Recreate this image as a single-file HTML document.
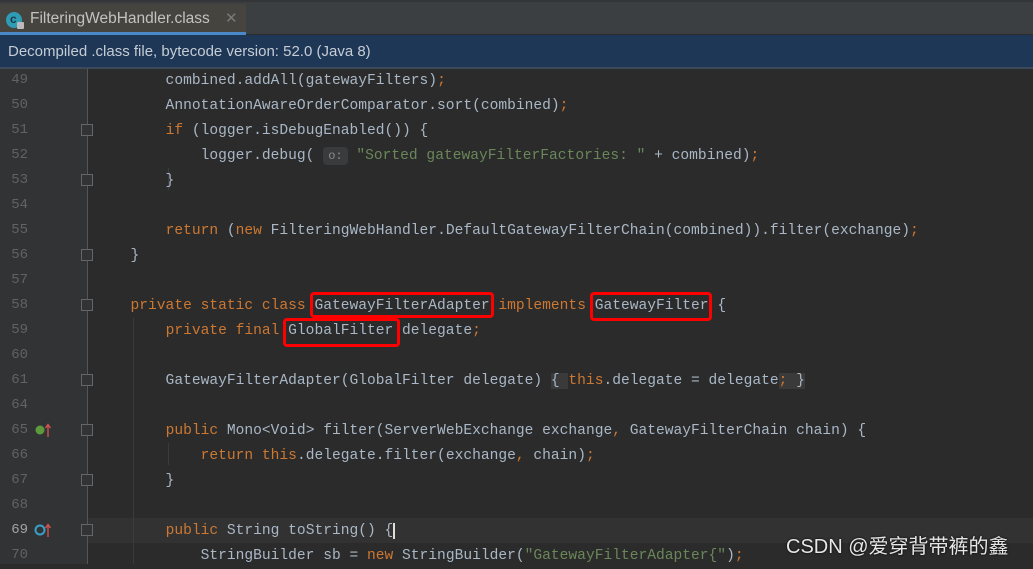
<!DOCTYPE html>
<html><head><meta charset="utf-8"><style>
*{margin:0;padding:0;box-sizing:border-box}
body{width:1033px;height:564px;overflow:hidden;background:#2b2b2b;position:relative;font-family:"Liberation Mono",monospace}
.tabbar{position:absolute;left:0;top:0;width:1033px;height:34px;background:#3c3f41;border-top:2px solid #333537}
.tab{position:absolute;left:0;top:2px;width:246px;height:30px;background:#45443f;font-family:"Liberation Sans",sans-serif;font-size:15.5px;color:#c2c2c2;line-height:30px;padding-left:30px}
.tab .x{position:absolute;left:225px;top:0;color:#7a7a7a;font-size:15px}
.tabline{position:absolute;left:0;top:30px;width:246px;height:4px;background:#4a88c7}
.icon{position:absolute;left:6px;top:8px;width:16px;height:16px;border-radius:50%;background:#2f9cb5}
.icon:after{content:"c";position:absolute;left:4px;top:-8px;color:#1c3a44;font-size:12px;font-weight:bold}
.lock{position:absolute;left:17px;top:18px;width:7px;height:7px;background:#bbb;border-radius:1px}
.notice{position:absolute;left:0;top:35px;width:1033px;height:34px;background:#1f3756;border-bottom:2px solid #3b4b5c;font-family:"Liberation Sans",sans-serif;font-size:15px;color:#c5ccd4;line-height:34px;padding-left:8px}
.gutter{position:absolute;left:0;top:69px;width:88px;height:495px;background:#313335}
.gline{position:absolute;left:87px;top:69px;width:1px;height:495px;background:#555}
.guide{position:absolute;width:1px;background:#3b3b3b}
.cur{position:absolute;left:88px;top:518px;width:945px;height:25px;background:#323232}
.ln{position:absolute;left:0;width:28px;text-align:right;font-size:14px;color:#606366;line-height:25px}
.c{position:absolute;left:95.5px;font-size:14.6px;line-height:25px;color:#a9b7c6;white-space:pre;top:0}
.k{color:#cc7832}.s{color:#6a8759}
.box{position:absolute;border:3px solid #f00;border-radius:4px}
.fold{position:absolute;left:81px;width:12px;height:12px;border:1px solid #666;background:#313335}
.hint{background:#3a3b3c;color:#8c8c8c;border-radius:4px;font-size:12px;padding:2px 5px}
.fb{background:#3a3a3a}
.wm{position:absolute;left:786px;top:530px;font-family:"Liberation Sans","Noto Sans CJK SC",sans-serif;font-size:20px;color:#e6e6e6;text-shadow:0 0 2px #000}
</style></head><body>
<div class="tabbar"><div class="tab"><div class="icon"></div><div class="lock"></div>FilteringWebHandler.class<span class="x">✕</span></div><div class="tabline"></div></div>
<div class="notice">Decompiled .class file, bytecode version: 52.0 (Java 8)</div>
<div class="gutter"></div>
<div class="cur"></div>
<div class="gline"></div>
<div class="guide" style="left:133px;top:318px;height:246px"></div>
<div class="guide" style="left:168px;top:168px;height:22px"></div>
<div class="guide" style="left:168px;top:443px;height:22px"></div>

<div class="ln" style="top:68px">49</div><div class="c" style="top:69px">        combined.addAll(gatewayFilters)<span class="k">;</span></div>
<div class="ln" style="top:93px">50</div><div class="c" style="top:94px">        AnnotationAwareOrderComparator.sort(combined)<span class="k">;</span></div>
<div class="ln" style="top:118px">51</div><div class="c" style="top:119px">        <span class="k">if </span>(logger.isDebugEnabled()) {</div>
<div class="ln" style="top:143px">52</div><div class="c" style="top:144px">            logger.debug( <span class="hint">o:</span> <span class="s">"Sorted gatewayFilterFactories: "</span> + combined)<span class="k">;</span></div>
<div class="ln" style="top:168px">53</div><div class="c" style="top:169px">        }</div>
<div class="ln" style="top:193px">54</div>
<div class="ln" style="top:218px">55</div><div class="c" style="top:219px">        <span class="k">return </span>(<span class="k">new </span>FilteringWebHandler.DefaultGatewayFilterChain(combined)).filter(exchange)<span class="k">;</span></div>
<div class="ln" style="top:243px">56</div><div class="c" style="top:244px">    }</div>
<div class="ln" style="top:268px">57</div>
<div class="ln" style="top:293px">58</div><div class="c" style="top:294px">    <span class="k">private static class </span>GatewayFilterAdapter <span class="k">implements </span>GatewayFilter {</div>
<div class="ln" style="top:318px">59</div><div class="c" style="top:319px">        <span class="k">private final </span>GlobalFilter delegate<span class="k">;</span></div>
<div class="ln" style="top:343px">60</div>
<div class="ln" style="top:368px">61</div><div class="c" style="top:369px">        GatewayFilterAdapter(GlobalFilter delegate) <span class="fb">{ </span><span class="k">this</span>.delegate = delegate<span class="k fb">;</span><span class="fb"> }</span></div>
<div class="ln" style="top:393px">64</div>
<div class="ln" style="top:418px">65</div><div class="c" style="top:419px">        <span class="k">public </span>Mono&lt;Void&gt; filter(ServerWebExchange exchange<span class="k">, </span>GatewayFilterChain chain) {</div>
<div class="ln" style="top:443px">66</div><div class="c" style="top:444px">            <span class="k">return this</span>.delegate.filter(exchange<span class="k">, </span>chain)<span class="k">;</span></div>
<div class="ln" style="top:468px">67</div><div class="c" style="top:469px">        }</div>
<div class="ln" style="top:493px">68</div>
<div class="ln" style="top:518px;color:#a4a3a3">69</div><div class="c" style="top:519px">        <span class="k">public </span>String toString() {<span style="border-left:2px solid #ddd"></span></div>
<div class="ln" style="top:543px">70</div><div class="c" style="top:544px">            StringBuilder sb = <span class="k">new </span>StringBuilder(<span class="s">"GatewayFilterAdapter{"</span>)<span class="k">;</span></div>

<div class="fold" style="top:124px"></div><div class="fold" style="top:174px"></div><div class="fold" style="top:249px"></div><div class="fold" style="top:299px"></div><div class="fold" style="top:374px"></div><div class="fold" style="top:424px"></div><div class="fold" style="top:474px"></div><div class="fold" style="top:524px"></div>

<svg style="position:absolute;left:34px;top:422px" width="18" height="16"><circle cx="6" cy="8" r="4.5" fill="#5c9a3c"/><path d="M14 3v12M11.5 6L14 2.5 16.5 6" stroke="#d9534f" stroke-width="1.3" fill="none"/></svg>
<svg style="position:absolute;left:34px;top:522px" width="18" height="16"><circle cx="6" cy="8" r="4.5" fill="none" stroke="#3aa0c8" stroke-width="2"/><path d="M14 3v12M11.5 6L14 2.5 16.5 6" stroke="#d9534f" stroke-width="1.3" fill="none"/></svg>

<div class="box" style="left:310px;top:292px;width:184px;height:26px"></div>
<div class="box" style="left:590px;top:292px;width:122px;height:29px"></div>
<div class="box" style="left:283px;top:318px;width:117px;height:29px"></div>
<div class="wm">CSDN @爱穿背带裤的鑫</div>
</body></html>
